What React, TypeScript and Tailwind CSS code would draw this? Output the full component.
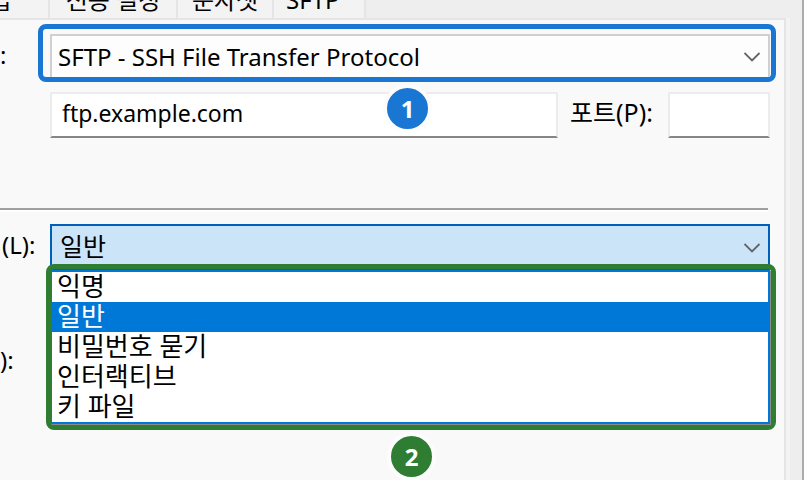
import { useState, type ReactNode } from "react";

const LOGON_TYPES = ["익명", "일반", "비밀번호 묻기", "인터랙티브", "키 파일"];

function Chevron() {
  return (
    <svg
      aria-hidden="true"
      viewBox="0 0 18 12"
      className="pointer-events-none absolute top-1/2 right-2 h-3 w-[18px] -translate-y-1/2"
      fill="none"
      stroke="#606468"
      strokeWidth="1.8"
    >
      <path d="M0.5 3 L8 10.5 L15.5 3" />
    </svg>
  );
}

function Tab({ label, className }: { label: string; className: string }) {
  return (
    <button
      type="button"
      role="tab"
      className={`flex h-[18px] items-end border-r-2 border-[#e5e5e5] bg-[#f3f3f3] pb-[6px] leading-6 whitespace-nowrap ${className}`}
    >
      {label}
    </button>
  );
}

function Badge({ className, children }: { className: string; children: ReactNode }) {
  return (
    <span
      className={`absolute flex size-[49px] items-center justify-center rounded-full border-4 border-[#fcfcfc] font-['Noto_Sans',sans-serif] text-2xl font-bold text-white ${className}`}
    >
      {children}
    </span>
  );
}

const field =
  "h-[46px] min-w-0 border-2 border-[#ececec] border-b-[#868686] bg-white px-[10px] pb-1 text-[23px] outline-none";

export default function App() {
  const [logon, setLogon] = useState("일반");

  return (
    <div className="flex min-h-screen overflow-hidden bg-[#eeeeee] font-['Noto_Sans','Noto_Sans_CJK_KR',sans-serif] text-2xl text-black">
      <main className="flex min-w-0 flex-1 flex-col">
        <div role="tablist" className="flex h-[18px] overflow-hidden">
          <Tab label="급" className="w-[50px] justify-end pr-9" />
          <Tab label="전송 설정" className="w-32 justify-center" />
          <Tab label="문자셋" className="w-24 justify-center" />
          <Tab label="SFTP" className="w-[92px] justify-start pl-3" />
        </div>

        <form className="relative flex-1 border-t-2 border-r-2 border-[#e5e5e5] bg-[#f9f9f9] pt-1">
          <div className="flex items-center pr-2">
            <label htmlFor="protocol" className="w-[38px] shrink-0 pt-1">
              :
            </label>
            <div className="relative h-[58px] flex-1 rounded-lg border-5 border-[#1976d2] pt-[5px] pr-px pl-[7px]">
              <div className="relative">
                <select
                  id="protocol"
                  className="h-[43px] w-full appearance-none border-2 border-b-0 border-[#d0d0d0] bg-[#fdfdfd] px-[6px] outline-none"
                >
                  <option>SFTP - SSH File Transfer Protocol</option>
                </select>
                <Chevron />
              </div>
            </div>
          </div>

          <div className="mt-[10px] flex items-center pr-[14px] pl-[50px]">
            <input aria-label="호스트" className={`flex-1 ${field}`} defaultValue="ftp.example.com" />
            <label htmlFor="port" className="w-[110px] shrink-0 pb-1 pl-3 text-[25px]">
              포트(P):
            </label>
            <input id="port" className={`w-[102px] ${field}`} />
          </div>

          <hr className="mt-[70px] mr-4 h-1 border-t-2 border-b-2 border-t-[#a0a0a0] border-b-white" />

          <div className="mt-3 flex items-start pr-[14px]">
            <label htmlFor="logon" className="w-[50px] shrink-0 pl-[2px] leading-[42px]">
              (L):
            </label>
            <div className="relative flex-1">
              <select
                id="logon"
                value={logon}
                onChange={(e) => setLogon(e.target.value)}
                className="block h-[46px] w-full appearance-none border-2 border-[#005fb8] bg-[#cce4f7] px-2 text-[25px] outline-none"
              >
                {LOGON_TYPES.map((type) => (
                  <option key={type}>{type}</option>
                ))}
              </select>
              <Chevron />
              <div className="absolute top-10 -right-[6px] -left-1 rounded-lg border-5 border-[#2e7d32] pt-px pr-px pb-px">
                <ul
                  role="listbox"
                  aria-label="로그온 유형"
                  className="border-2 border-l-1 border-[#0078d7] bg-white text-[26px] leading-7 shadow-[1px_1px_0_#8a8a8a]"
                >
                  {LOGON_TYPES.map((type) => (
                    <li
                      key={type}
                      role="option"
                      aria-selected={type === logon}
                      onClick={() => setLogon(type)}
                      className="h-[30px] px-[5px] aria-selected:bg-[#0078d7] aria-selected:text-white"
                    >
                      {type}
                    </li>
                  ))}
                </ul>
              </div>
            </div>
          </div>

          <p className="mt-[74px] leading-8">):</p>

          <Badge className="top-[64px] left-[383px] bg-[#1976d2]">1</Badge>
          <Badge className="top-[412px] left-[387px] bg-[#2e7d32]">2</Badge>
        </form>
      </main>
      <div className="mr-3 mt-[18px] w-1 bg-[#f3f3f3]" />
      <div className="w-[2px] bg-[#ababab]" />
    </div>
  );
}
